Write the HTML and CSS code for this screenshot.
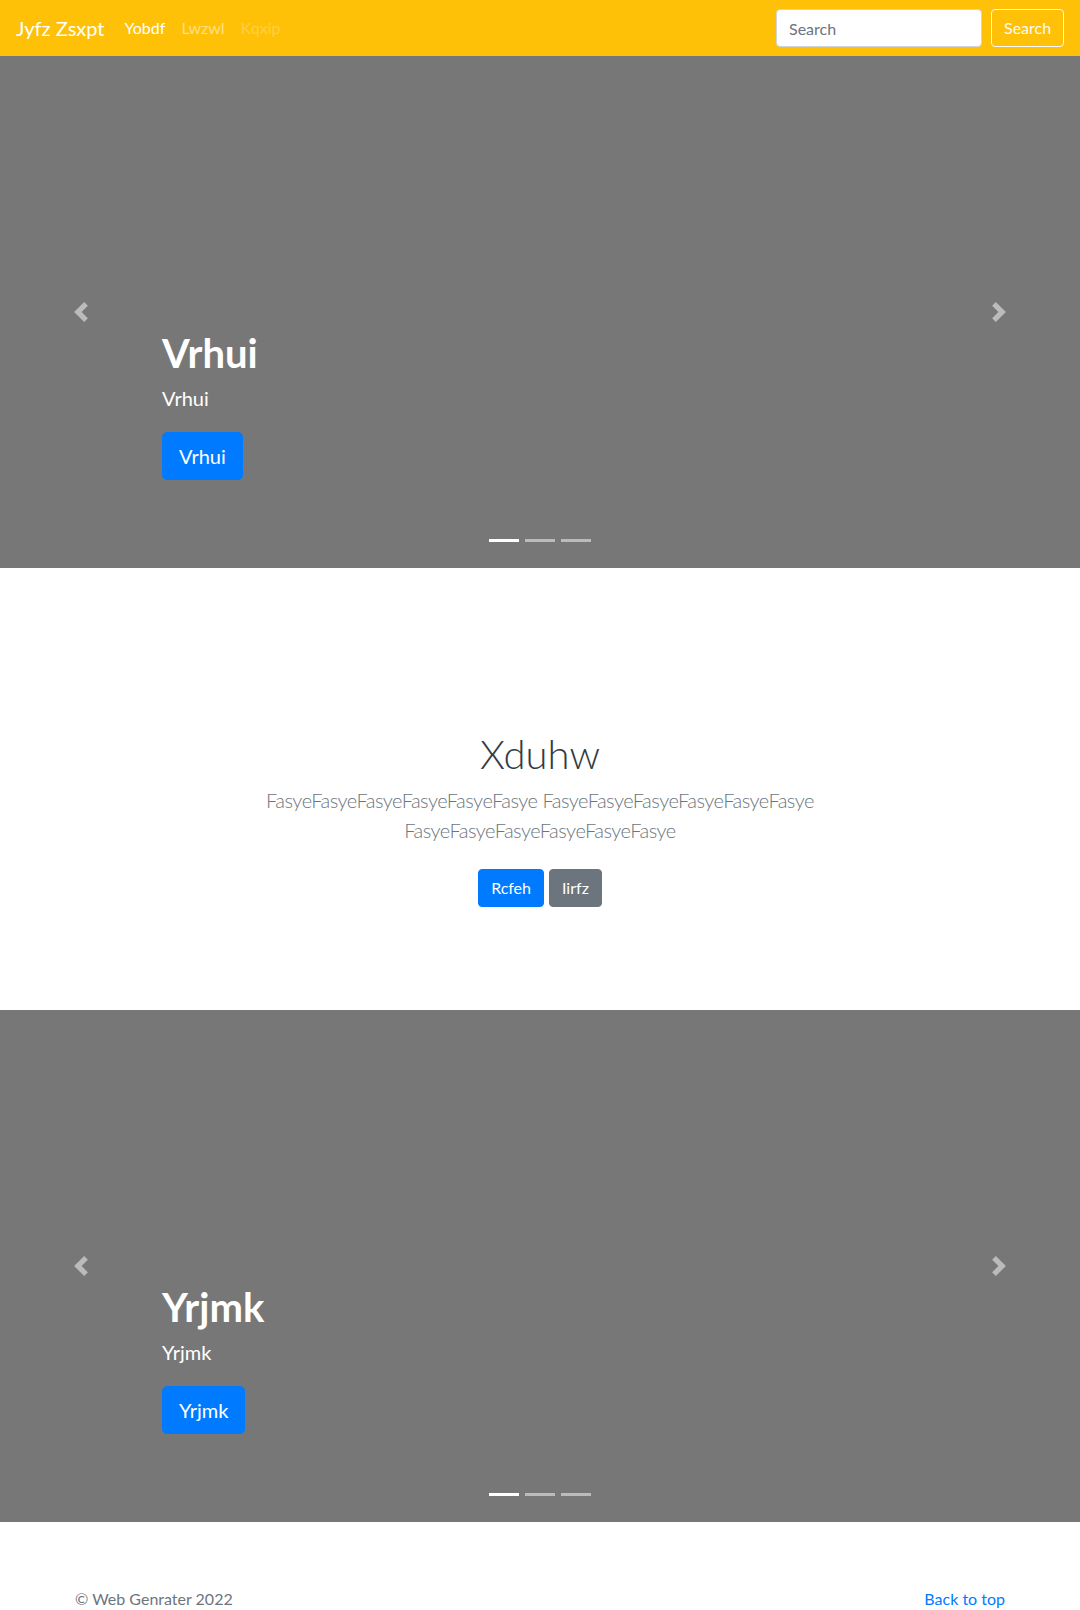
FILE: index.html
```html
<!DOCTYPE html>
<html lang="en">
<head>
<meta charset="utf-8">
<title>Jyfz Zsxpt</title>
<link rel="stylesheet" href="styles.css">
</head>
<body>
<nav class="navbar">
  <a class="brand" href="#">Jyfz Zsxpt</a>
  <ul class="nav">
    <li><a class="nav-link active" href="#">Yobdf</a></li>
    <li><a class="nav-link" href="#">Lwzwl</a></li>
    <li><a class="nav-link disabled" href="#">Kqxip</a></li>
  </ul>
  <form class="search">
    <input class="search-input" type="text" placeholder="Search">
    <button class="btn-outline" type="button">Search</button>
  </form>
</nav>

<section class="carousel">
  <div class="slide">
    <div class="caption">
      <h1 class="cap-title">Vrhui</h1>
      <p class="cap-text">Vrhui</p>
      <a class="btn-lg" href="#">Vrhui</a>
    </div>
  </div>
  <a class="ctrl prev" href="#"><svg viewBox="0 0 8 8" width="20" height="20"><path d="M5.25 0l-4 4 4 4 1.5-1.5L4.25 4l2.5-2.5L5.25 0z" fill="#fff"/></svg></a>
  <a class="ctrl next" href="#"><svg viewBox="0 0 8 8" width="20" height="20"><path d="M2.75 0l-1.5 1.5L3.75 4l-2.5 2.5L2.75 8l4-4-4-4z" fill="#fff"/></svg></a>
  <ol class="indicators"><li class="active"></li><li></li><li></li></ol>
</section>

<section class="intro">
  <h1 class="intro-title">Xduhw</h1>
  <p class="lead">FasyeFasyeFasyeFasyeFasyeFasye FasyeFasyeFasyeFasyeFasyeFasye FasyeFasyeFasyeFasyeFasyeFasye</p>
  <div class="intro-actions">
    <a class="btn btn-primary" href="#">Rcfeh</a>
    <a class="btn btn-secondary" href="#">Iirfz</a>
  </div>
</section>

<section class="carousel">
  <div class="slide">
    <div class="caption">
      <h1 class="cap-title">Yrjmk</h1>
      <p class="cap-text">Yrjmk</p>
      <a class="btn-lg" href="#">Yrjmk</a>
    </div>
  </div>
  <a class="ctrl prev" href="#"><svg viewBox="0 0 8 8" width="20" height="20"><path d="M5.25 0l-4 4 4 4 1.5-1.5L4.25 4l2.5-2.5L5.25 0z" fill="#fff"/></svg></a>
  <a class="ctrl next" href="#"><svg viewBox="0 0 8 8" width="20" height="20"><path d="M2.75 0l-1.5 1.5L3.75 4l-2.5 2.5L2.75 8l4-4-4-4z" fill="#fff"/></svg></a>
  <ol class="indicators"><li class="active"></li><li></li><li></li></ol>
</section>

<footer class="footer">
  <div class="footer-inner">
    <p class="copy">&copy; Web Genrater 2022</p>
    <a class="top-link" href="#">Back to top</a>
  </div>
</footer>
</body>
</html>
```

FILE: styles.css
```css
* { box-sizing: border-box; }

body {
  margin: 0;
  font-family: "Lato", "Open Sans", sans-serif;
  font-size: 16px;
  line-height: 1.5;
  color: #212529;
  background: #fff;
}

a { text-decoration: none; }

/* navbar */
.navbar {
  height: 56px;
  background: #ffc107;
  display: flex;
  align-items: center;
  padding: 0 16px;
}
.brand {
  color: #fff;
  font-size: 20px;
  line-height: 30px;
  margin-right: 12px;
}
.nav {
  list-style: none;
  margin: 0;
  padding: 0;
  display: flex;
  flex: 1;
}
.nav-link {
  display: block;
  padding: 8px;
  color: rgba(255,255,255,.5);
  font-size: 16px;
}
.nav-link.active { color: #fff; }
.nav-link.disabled { color: rgba(255,255,255,.25); }

.search {
  display: flex;
  align-items: center;
  gap: 9px;
}
.search-input {
  width: 206px;
  height: 38px;
  padding: 6px 12px;
  font: inherit;
  font-size: 16px;
  color: #495057;
  background: #fff;
  border: 1px solid #ced4da;
  border-radius: 4px;
}
.search-input::placeholder { color: #6c757d; }
.btn-outline {
  height: 38px;
  width: 73px;
  padding: 6px 12px;
  font: inherit;
  font-size: 16px;
  color: #f8f9fa;
  background: transparent;
  border: 1px solid #f8f9fa;
  border-radius: 4px;
}

/* carousel */
.carousel {
  position: relative;
  height: 512px;
  background: #777;
}
.slide {
  height: 100%;
  display: flex;
  align-items: flex-end;
}
.caption {
  margin: 0 15% 88px;
  color: #fff;
  display: flex;
  flex-direction: column;
  align-items: flex-start;
}
.cap-title {
  margin: 0 0 6px;
  font-size: 40px;
  line-height: 48px;
  font-weight: 700;
}
.cap-text {
  margin: 0 0 19px;
  font-size: 20px;
  line-height: 30px;
}
.btn-lg {
  display: inline-block;
  height: 48px;
  padding: 8px 16px;
  font-size: 20px;
  line-height: 30px;
  color: #fff;
  background: #007bff;
  border: 1px solid #007bff;
  border-radius: 5px;
}

.ctrl {
  position: absolute;
  top: 0;
  bottom: 0;
  width: 15%;
  display: flex;
  align-items: center;
  justify-content: center;
  opacity: .5;
}
.ctrl svg { display: block; }
.prev { left: 0; }
.next { right: 0; }

.indicators {
  position: absolute;
  left: 0;
  right: 0;
  bottom: 16px;
  margin: 0;
  padding: 0;
  list-style: none;
  display: flex;
  justify-content: center;
}
.indicators li {
  width: 30px;
  height: 23px;
  margin: 0 3px;
  border-top: 10px solid transparent;
  border-bottom: 10px solid transparent;
  background: #fff;
  background-clip: padding-box;
  opacity: .5;
}
.indicators li.active { opacity: 1; }

/* intro */
.intro {
  height: 442px;
  padding-top: 162px;
  text-align: center;
  display: flex;
  flex-direction: column;
  align-items: center;
}
.intro-title {
  margin: 0 0 7px;
  font-size: 40px;
  line-height: 48px;
  font-weight: 300;
  color: #343a40;
}
.lead {
  margin: 0 0 16px;
  max-width: 620px;
  font-size: 20px;
  line-height: 30px;
  font-weight: 300;
  letter-spacing: -0.5px;
  color: #6c757d;
}
.intro-actions {
  margin-top: 8px;
  display: flex;
  gap: 5px;
}
.btn {
  display: inline-block;
  height: 38px;
  padding: 6px 12px;
  font-size: 16px;
  line-height: 24px;
  color: #fff;
  border-radius: 4px;
  border: 1px solid transparent;
}
.btn-primary { background: #007bff; border-color: #007bff; }
.btn-secondary { background: #6c757d; border-color: #6c757d; }

/* footer */
.footer {
  padding: 65px 0 48px;
}
.footer-inner {
  max-width: 960px;
  margin: 0 auto;
  padding: 0 15px;
  display: flex;
  justify-content: space-between;
  line-height: 24px;
}
.copy {
  margin: 0;
  color: #6c757d;
}
.top-link { color: #007bff; }
```
